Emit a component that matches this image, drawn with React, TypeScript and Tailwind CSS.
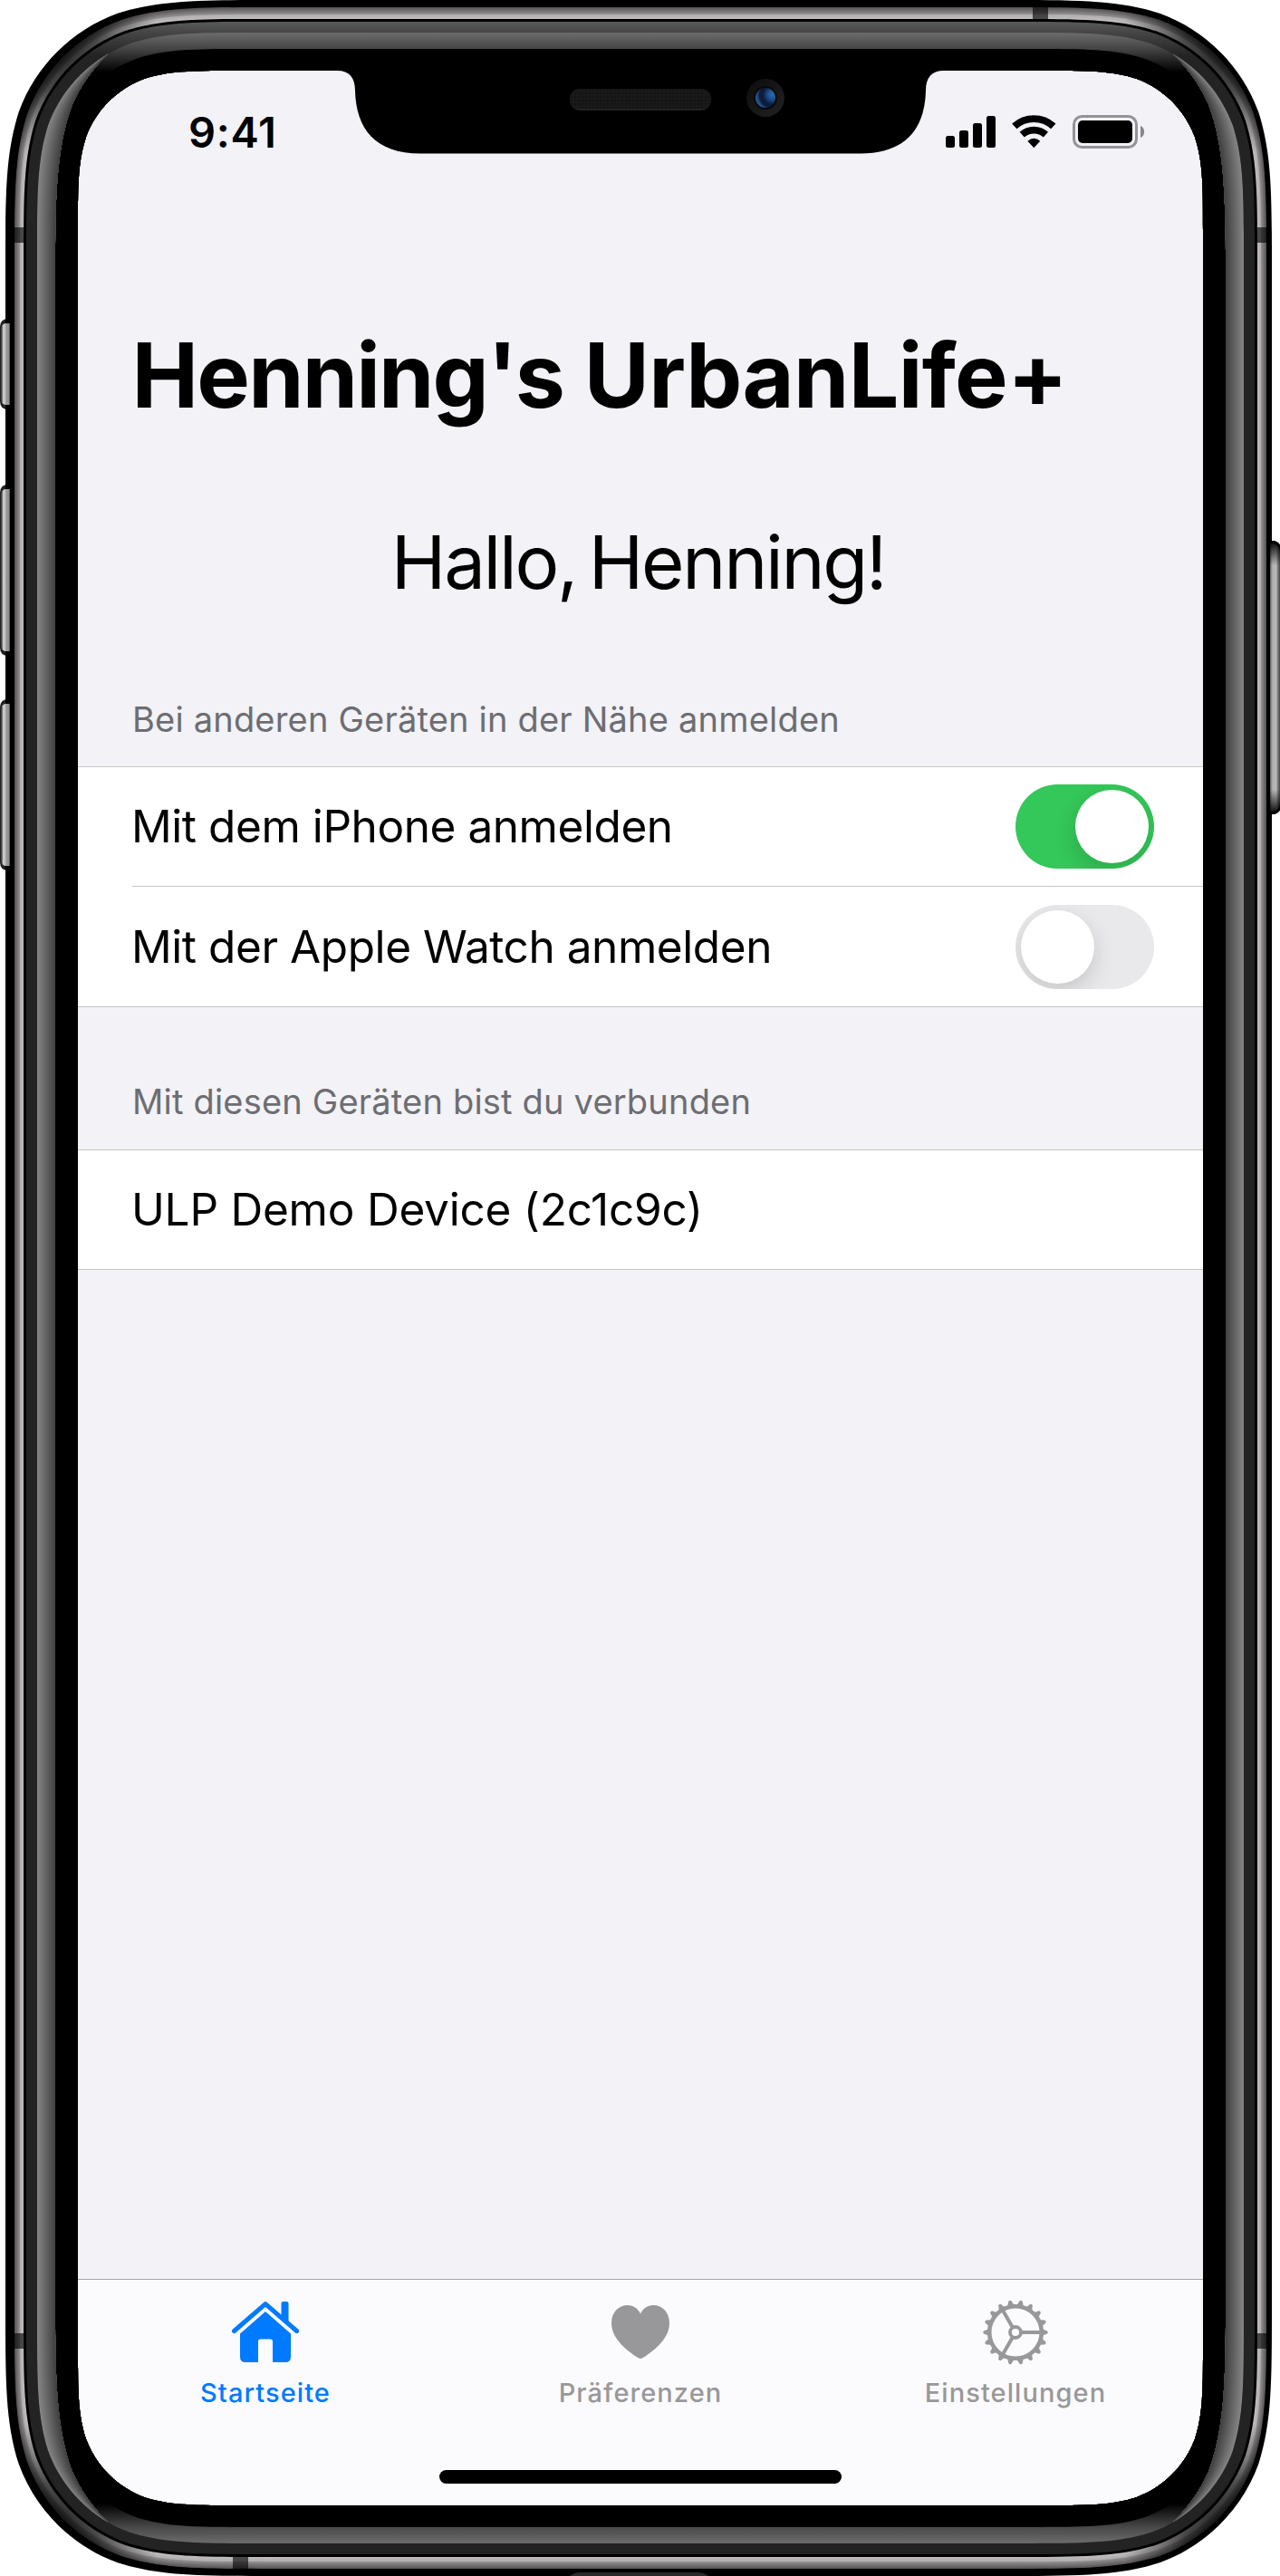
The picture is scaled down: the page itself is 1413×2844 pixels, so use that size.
import React from 'react';

// Rounded rectangle with continuous corners; l/t are the insets, r the corner radius, R the right edge.
const squircle = (l: number, t: number, r: number, R = 1414 - l) => {
  const B = 2844 - t;
  const [a, b, c, d, e, f, g] = [1.528665, 1.088493, 0.868407, 0.631494, 0.372824, 0.16906, 0.074911].map((k) => k * r);
  return [
    `M${l + a} ${t}H${R - a}`,
    `C${R - b} ${t} ${R - c} ${t} ${R - d} ${t + g}C${R - e} ${t + f} ${R - f} ${t + e} ${R - g} ${t + d}C${R} ${t + c} ${R} ${t + b} ${R} ${t + a}`,
    `V${B - a}`,
    `C${R} ${B - b} ${R} ${B - c} ${R - g} ${B - d}C${R - f} ${B - e} ${R - e} ${B - f} ${R - d} ${B - g}C${R - c} ${B} ${R - b} ${B} ${R - a} ${B}`,
    `H${l + a}`,
    `C${l + b} ${B} ${l + c} ${B} ${l + d} ${B - g}C${l + e} ${B - f} ${l + f} ${B - e} ${l + g} ${B - d}C${l} ${B - c} ${l} ${B - b} ${l} ${B - a}`,
    `V${t + a}`,
    `C${l} ${t + b} ${l} ${t + c} ${l + g} ${t + d}C${l + f} ${t + e} ${l + e} ${t + f} ${l + d} ${t + g}C${l + c} ${t} ${l + b} ${t} ${l + a} ${t}Z`,
  ].join('');
};

const SCREEN = squircle(86, 78, 117);
const METAL = squircle(16, 8, 187);

const metalLayers = Array.from({ length: 20 }, (_, i) => {
  const k = i / 19;
  const v = Math.round(k < 0.62 ? 88 + (k / 0.62) * 62 : 176 + ((k - 0.62) / 0.38) * 16);
  return { d: squircle(16 + i * 0.5, 8 + i * 0.65, 187 - i * 0.6), fill: `rgb(${v},${v - 3},${v - 2})` };
});

const outerEdge = [[41, 283], [41, 212.3], [41, 176.7], [53.1, 138.3], [65.3, 104.8], [88.9, 77], [119.3, 59.4]];
const innerEdge = [[61, 283], [61, 200], [65, 155], [80, 115], [88, 97], [100, 78], [119.3, 59.4]];

const edge = (k: number) => {
  const p = outerEdge.map(([x, y], i) => [x + (innerEdge[i][0] - x) * k, y + (innerEdge[i][1] - y) * k]);
  const top = (i: number) => `${p[i][0]} ${p[i][1]}`;
  const low = (i: number) => `${p[i][0]} ${2844 - p[i][1]}`;
  return {
    down: `C${top(5)} ${top(4)} ${top(3)}C${top(2)} ${top(1)} ${top(0)}L${low(0)}C${low(1)} ${low(2)} ${low(3)}C${low(4)} ${low(5)} ${low(6)}`,
    up: `C${low(5)} ${low(4)} ${low(3)}C${low(2)} ${low(1)} ${low(0)}L${top(0)}C${top(1)} ${top(2)} ${top(3)}C${top(4)} ${top(5)} ${top(6)}`,
  };
};

const sideLayers = Array.from({ length: 20 }, (_, i) => {
  const v = Math.round(132 - i * 3.5);
  return { d: `M119.3 59.4${edge(i / 20).down}${edge(1).up}Z`, fill: `rgb(${v},${v},${v})` };
});

const MIRROR = 'translate(1414 0) scale(-1 1)';
const NOTCH =
  'M372 76V78C386 78 392 86 392 100C393 142 414 169.500 464 169.500H950C1000 169.500 1021 142 1022 100C1022 86 1028 78 1042 78V76Z';

const sideButtons = [
  [352, 100],
  [535, 189],
  [772, 189],
];

function DeviceFrame() {
  return (
    <svg className="pointer-events-none absolute inset-0" width="1413" height="2844" viewBox="0 0 1413 2844" aria-hidden="true">
      <defs>
        <linearGradient id="band" gradientUnits="userSpaceOnUse" x1="0" y1="24" x2="0" y2="62">
          <stop offset="0" stopColor="#5a5a5a" />
          <stop offset="0.32" stopColor="#454545" />
          <stop offset="1" stopColor="#232323" />
        </linearGradient>
        <linearGradient id="bevel" gradientUnits="userSpaceOnUse" x1="0" y1="36" x2="0" y2="2808">
          <stop offset="0" stopColor="#6c6c6c" />
          <stop offset="0.0065" stopColor="#444" />
          <stop offset="0.0158" stopColor="#000" />
          <stop offset="0.9842" stopColor="#000" />
          <stop offset="0.9935" stopColor="#484848" />
          <stop offset="1" stopColor="#6c6c6c" />
        </linearGradient>
        <radialGradient id="corner">
          <stop offset="0" stopColor="#000" stopOpacity="0.8" />
          <stop offset="0.4" stopColor="#000" stopOpacity="0.6" />
          <stop offset="1" stopColor="#000" stopOpacity="0" />
        </radialGradient>
        <linearGradient id="button">
          <stop offset="0" stopColor="#333" />
          <stop offset="0.2" stopColor="#8a8a8a" />
          <stop offset="0.25" stopColor="#c8c8c8" />
          <stop offset="0.5" stopColor="#c4c4c4" />
          <stop offset="0.55" stopColor="#a0a0a0" />
          <stop offset="0.85" stopColor="#8c8c8c" />
          <stop offset="1" stopColor="#444" />
        </linearGradient>
        <linearGradient id="power">
          <stop offset="0" stopColor="#555" />
          <stop offset="0.2" stopColor="#aaa" />
          <stop offset="0.6" stopColor="#bbb" />
          <stop offset="0.75" stopColor="#888" />
          <stop offset="1" stopColor="#444" />
        </linearGradient>
        <linearGradient id="fade" x1="0" y1="0" x2="0" y2="1">
          <stop offset="0" stopColor="#000" />
          <stop offset="0.09" stopColor="#000" stopOpacity="0" />
          <stop offset="0.91" stopColor="#000" stopOpacity="0" />
          <stop offset="1" stopColor="#000" />
        </linearGradient>
        <radialGradient id="lens" cx="0.85" cy="0.35" r="0.8">
          <stop offset="0" stopColor="#2a6fb5" />
          <stop offset="0.3" stopColor="#1d4f8a" />
          <stop offset="0.6" stopColor="#0d1c3c" />
          <stop offset="0.8" stopColor="#0d1c3c" />
          <stop offset="1" stopColor="#28568c" />
        </radialGradient>
        <linearGradient id="housing" x1="0" y1="0" x2="1" y2="1">
          <stop offset="0" stopColor="#0c0c0c" />
          <stop offset="1" stopColor="#222" />
        </linearGradient>
        <pattern id="mesh" width="8" height="8" patternUnits="userSpaceOnUse">
          <rect width="8" height="8" fill="#141414" />
          <path d="M0 1H8M1 0V8M0 5H8M5 0V8" stroke="#1c1c1c" strokeWidth="1" />
        </pattern>
        <clipPath id="metalClip">
          <path d={METAL} />
        </clipPath>
        <clipPath id="body">
          <path clipRule="evenodd" d={squircle(6, 0, 196, 1404) + SCREEN} />
        </clipPath>
      </defs>

      {sideButtons.map(([y, h]) => (
        <path key={y} d={`M14 ${y}H9Q0 ${y} 0 ${y + 9}V${y + h - 9}Q0 ${y + h} 9 ${y + h}H14Z`} fill="#222" />
      ))}
      <path d="M1400 597H1404Q1414 597 1414 607V889Q1414 899 1404 899H1400Z" fill="#000" />

      <g clipPath="url(#body)">
        <rect width="1413" height="2844" fill="#000" />
        {metalLayers.map((m) => (
          <path key={m.d} d={m.d} fill={m.fill} />
        ))}
        <g clipPath="url(#metalClip)">
          {[[60, 54], [1354, 54], [60, 2790], [1354, 2790]].map(([x, y]) => (
            <circle key={`${x}-${y}`} cx={x} cy={y} r="118" fill="url(#corner)" />
          ))}
        </g>
        <g fill="#000" fillOpacity="0.62">
          <rect x="16" y="251" width="10" height="17" />
          <rect x="1388" y="251" width="10" height="17" />
          <rect x="16" y="2576" width="10" height="17" />
          <rect x="1388" y="2576" width="10" height="17" />
          <rect x="1140" y="8" width="17" height="13" />
          <rect x="257" y="2823" width="17" height="13" />
        </g>
        <path d={squircle(26, 21, 177)} fill="#000" />
        <path d={squircle(29, 24, 174)} fill="url(#band)" />
        <path d={squircle(41, 36, 162)} fill="url(#bevel)" />
        <path d={squircle(61, 54, 142)} fill="#000" />
        {sideLayers.map((s) => (
          <g key={s.d} fill={s.fill}>
            <path d={s.d} />
            <path d={s.d} transform={MIRROR} />
          </g>
        ))}
      </g>

      {sideButtons.map(([y, h]) => (
        <path key={y} d={`M11 ${y + 5}H6Q1 ${y + 6} 1 ${y + 12}V${y + h - 12}Q1 ${y + h - 6} 6 ${y + h - 5}H11Z`} fill="url(#button)" />
      ))}
      <path d="M1402 600H1405Q1413 601 1413 610V886Q1413 895 1405 896H1402Z" fill="url(#power)" />
      <path d="M1402 597H1404Q1414 597 1414 607V889Q1414 899 1404 899H1402Z" fill="url(#fade)" />

      <path d="M629 2844Q634 2840 641 2840H770Q777 2840 782 2844Z" fill="#2a2a2a" />

      <path d={NOTCH} fill="#000" />
      <rect x="629" y="98" width="156" height="24" rx="12" fill="#222" />
      <rect x="629" y="98" width="156" height="22" rx="11" fill="url(#mesh)" />
      <circle cx="845" cy="108" r="21" fill="url(#housing)" />
      <circle cx="845" cy="108" r="13" fill="#080808" />
      <circle cx="845" cy="108" r="11" fill="url(#lens)" />
    </svg>
  );
}

function StatusBar() {
  return (
    <div className="flex h-[132px] shrink-0 items-start justify-between pr-[64px] pl-[122px]">
      <span className="mt-[40px] text-[47px] leading-[56px] font-semibold tracking-[0.7px]">9:41</span>
      <div className="mt-[49px] flex items-start">
        <svg width="55" height="37" viewBox="0 0 55 37">
          <rect x="0" y="23" width="10" height="13" rx="2.500" />
          <rect x="15" y="17" width="10" height="19" rx="2.500" />
          <rect x="30" y="9" width="10" height="27" rx="2.500" />
          <rect x="45" y="1" width="10" height="35" rx="2.500" />
        </svg>
        <svg className="ml-[18px]" width="49" height="37" viewBox="0 0 49 37">
          <g fill="none" stroke="#000" strokeWidth="7.800">
            <path d="M2.800 12.300A32.100 32.100 0 0 1 45.800 12.300" />
            <path d="M11.200 21.700A19.500 19.500 0 0 1 37.400 21.700" />
          </g>
          <path d="M24.300 36.300L17.400 28.800Q24.300 22.500 31.200 28.800Z" />
        </svg>
        <svg className="ml-[18px]" width="80" height="37" viewBox="0 0 80 37">
          <rect x="1.500" y="1.500" width="69" height="34" rx="9" fill="none" stroke="#949497" strokeWidth="3" />
          <rect x="6" y="6" width="60" height="25" rx="5" />
          <path d="M75 12C80.500 14 80.500 23 75 25Z" fill="#88888b" />
        </svg>
      </div>
    </div>
  );
}

function Toggle({ on }: { on?: boolean }) {
  return (
    <span
      role="switch"
      aria-checked={!!on}
      className={`flex h-[93px] w-[153px] overflow-hidden rounded-full p-[6px] ${on ? 'justify-end bg-[#34c759]' : 'justify-start bg-[#e9e9eb]'}`}
    >
      <span className="size-[81px] rounded-full bg-white shadow-[0_9px_24px_rgba(0,0,0,0.15)]" />
    </span>
  );
}

function HomeIcon() {
  return (
    <svg width="74" height="68" viewBox="0 0 74 68" fill="#007aff">
      <path d="M2.500 32.500L37 2.700L71.500 32.500" fill="none" stroke="#007aff" strokeWidth="5" strokeLinecap="round" strokeLinejoin="round" />
      <path d="M54.500 18V2Q54.500 0 56.500 0H60.500Q62.500 0 62.500 2V25Z" />
      <path d="M37 11L65 35.500V61Q65 67 59 67H45V44Q45 41.500 42.500 41.500H31.500Q29 41.500 29 44V67H15Q9 67 9 61V35.500Z" />
    </svg>
  );
}

function HeartIcon() {
  return (
    <svg width="64" height="59" viewBox="0 0 64 59" fill="#98989a">
      <path d="M32 9.500C29 3.500 24 0 18 0C7.500 0 0 8 0 20C0 34 11 45.500 26 56C30 58.700 32 59 32 59C32 59 34 58.700 38 56C53 45.500 64 34 64 20C64 8 56.500 0 46 0C40 0 35 3.500 32 9.500Z" />
    </svg>
  );
}

function GearIcon() {
  return (
    <svg width="72" height="72" viewBox="-36 -36 72 72" fill="none" stroke="#98989a">
      <circle r="28.800" strokeWidth="4.600" />
      <circle r="6" strokeWidth="3.800" />
      {[0, 120, 240].map((a) => (
        <path key={a} d="M7 0H28" strokeWidth="4" transform={`rotate(${a})`} />
      ))}
      {Array.from({ length: 18 }, (_, i) => (
        <path key={i} d="M29.500 -3.800L35 -1.600Q36.500 0 35 1.600L29.500 3.800Z" fill="#98989a" stroke="none" transform={`rotate(${i * 20})`} />
      ))}
    </svg>
  );
}

function Tab({ icon, label, className }: { icon: React.ReactNode; label: string; className: string }) {
  return (
    <div className={`flex flex-1 flex-col items-center text-[29px] leading-[36px] font-medium tracking-[1.08px] ${className}`}>
      <div className="flex h-[107px] items-center pt-[8px]">{icon}</div>
      <span>{label}</span>
    </div>
  );
}

export default function App() {
  return (
    <div className="relative h-[2844px] w-[1413px] overflow-hidden bg-white pt-[78px] pl-[86px] font-['Inter',sans-serif] text-black">
      <main className="flex h-[2688px] w-[1242px] flex-col bg-[#f2f2f7]">
        <StatusBar />
        <h1 className="mt-[145px] pl-[59.5px] text-[98.5px] leading-[120px] font-bold tracking-[-0.7px] whitespace-nowrap">
          <span className="tracking-[-1.8px]">Henning's</span> UrbanLife+
        </h1>
        <p className="mt-[96px] pr-[5px] text-center text-[81.5px] leading-[100px] tracking-[-2.3px] [word-spacing:-7px]">Hallo, Henning!</p>
        <h2 className="mt-[99px] pl-[60px] text-[38px] leading-[48px] tracking-[0.2px] text-[#6d6d72]">
          Bei anderen Geräten in der Nähe anmelden
        </h2>
        <section className="mt-[28px] border-y border-[#c6c6c8] bg-white pl-[60px] text-[49.5px] tracking-[-0.43px]">
          <div className="flex h-[131px] items-center justify-between pr-[54px]">
            <span className="-ml-px">Mit dem iPhone anmelden</span>
            <Toggle on />
          </div>
          <div className="flex h-[133px] items-center justify-between border-t border-[#c6c6c8] pr-[54px]">
            <span className="-ml-px">Mit der Apple Watch anmelden</span>
            <Toggle />
          </div>
        </section>
        <h2 className="mt-[80px] pl-[60px] text-[38px] leading-[48px] tracking-[0.2px] text-[#6d6d72]">
          Mit diesen Geräten bist du verbunden
        </h2>
        <section className="mt-[29px] border-y border-[#c6c6c8] bg-white pl-[60px] text-[49.5px] tracking-[-0.22px]">
          <div className="flex h-[131px] items-center">
            <span className="-ml-px">ULP Demo Device (2c1c9c)</span>
          </div>
        </section>
        <nav className="mt-auto flex h-[250px] flex-col justify-between border-t border-[#a7a7aa] bg-[#fbfbfd] pb-[24px]">
          <div className="flex">
            <Tab icon={<HomeIcon />} label="Startseite" className="text-[#007aff]" />
            <Tab icon={<HeartIcon />} label="Präferenzen" className="text-[#98989a]" />
            <Tab icon={<GearIcon />} label="Einstellungen" className="text-[#98989a]" />
          </div>
          <div className="mx-auto h-[15px] w-[444px] rounded-full bg-black" />
        </nav>
      </main>
      <DeviceFrame />
    </div>
  );
}
